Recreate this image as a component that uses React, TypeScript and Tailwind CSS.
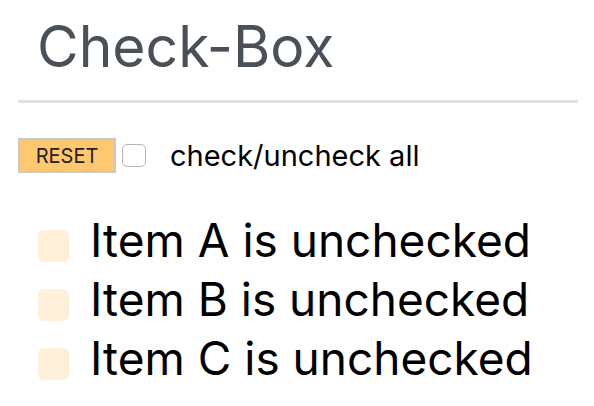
export default function App() {
  const items = ["A", "B", "C"];
  return (
    <div className="min-h-screen bg-white pl-[18px] pr-4 pt-[12px]" style={{ fontFamily: "Inter, 'Liberation Sans', sans-serif" }}>
      <h1 className="pl-[19px] text-[57px] leading-[70px] font-normal text-[#495057]">Check-Box</h1>
      <div className="mt-[18px] h-[3px] bg-[#dee2e6]"></div>

      <div className="mt-[35px] flex items-center">
        <button className="h-[35px] w-[98px] border-2 border-[#c9c9c9] bg-[#ffc86e] text-[20px] leading-none text-[#222]">
          RESET
        </button>
        <span className="ml-[6px] h-[23px] w-[24px] rounded-[5px] border border-[#b5b5b5] bg-white"></span>
        <span className="ml-[24px] text-[29px] leading-none text-black">check/uncheck all</span>
      </div>

      <ul className="mt-[37px] pl-5">
        {items.map((l) => (
          <li key={l} className="flex h-[59px] items-center">
            <span className="mt-[12px] h-[32px] w-[31px] rounded-[6px] bg-[#fff0d9]"></span>
            <span className="ml-[21px] text-[46px] leading-none text-black">Item {l} is unchecked</span>
          </li>
        ))}
      </ul>
    </div>
  );
}
